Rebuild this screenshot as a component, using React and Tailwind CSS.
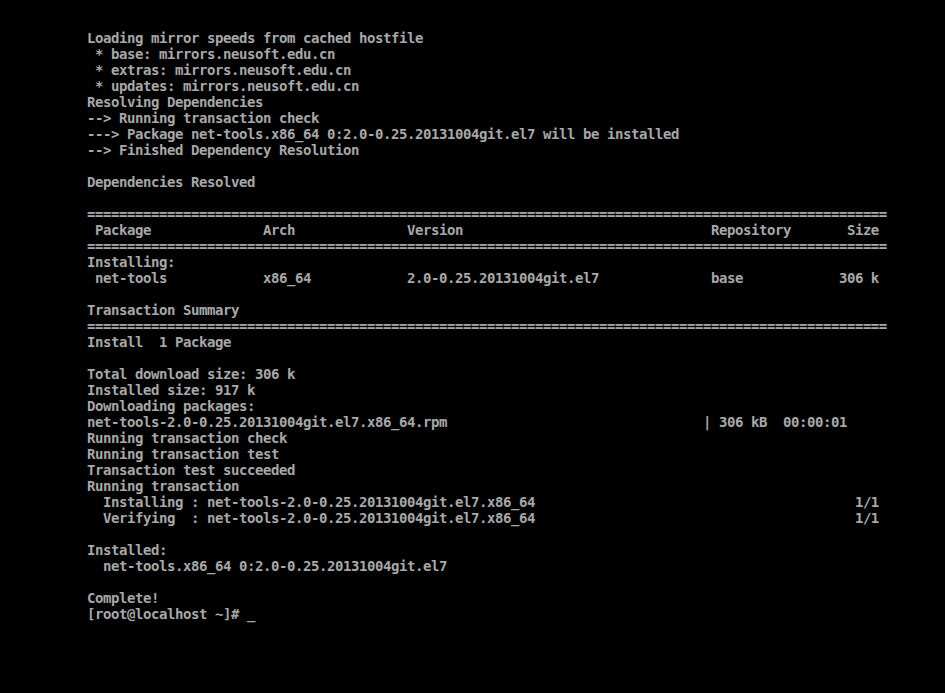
const row = (...parts) => {
  let s = '';
  for (const [col, text] of parts) {
    s = s.padEnd(col, ' ') + text;
  }
  return s;
};

const rule = '='.repeat(100);

const lines = [
  'Loading mirror speeds from cached hostfile',
  ' * base: mirrors.neusoft.edu.cn',
  ' * extras: mirrors.neusoft.edu.cn',
  ' * updates: mirrors.neusoft.edu.cn',
  'Resolving Dependencies',
  '--> Running transaction check',
  '---> Package net-tools.x86_64 0:2.0-0.25.20131004git.el7 will be installed',
  '--> Finished Dependency Resolution',
  '',
  'Dependencies Resolved',
  '',
  rule,
  row([1, 'Package'], [22, 'Arch'], [40, 'Version'], [78, 'Repository'], [95, 'Size']),
  rule,
  'Installing:',
  row([1, 'net-tools'], [22, 'x86_64'], [40, '2.0-0.25.20131004git.el7'], [78, 'base'], [94, '306 k']),
  '',
  'Transaction Summary',
  rule,
  'Install  1 Package',
  '',
  'Total download size: 306 k',
  'Installed size: 917 k',
  'Downloading packages:',
  row([0, 'net-tools-2.0-0.25.20131004git.el7.x86_64.rpm'], [77, '| 306 kB  00:00:01']),
  'Running transaction check',
  'Running transaction test',
  'Transaction test succeeded',
  'Running transaction',
  row([2, 'Installing : net-tools-2.0-0.25.20131004git.el7.x86_64'], [96, '1/1']),
  row([2, 'Verifying  : net-tools-2.0-0.25.20131004git.el7.x86_64'], [96, '1/1']),
  '',
  'Installed:',
  '  net-tools.x86_64 0:2.0-0.25.20131004git.el7',
  '',
  'Complete!',
  '[root@localhost ~]# _',
];

export default function App() {
  return (
    <div className="w-full h-[693px] bg-black overflow-hidden pl-[87px] pt-[30px]">
      <div className="font-['DejaVu_Sans_Mono',monospace] font-bold text-[14px] tracking-[-0.43px] leading-4 text-[#a8a8a8]">
        {lines.map((line, i) => (
          <div key={i} className="h-4 whitespace-pre">
            {line}
          </div>
        ))}
      </div>
    </div>
  );
}
